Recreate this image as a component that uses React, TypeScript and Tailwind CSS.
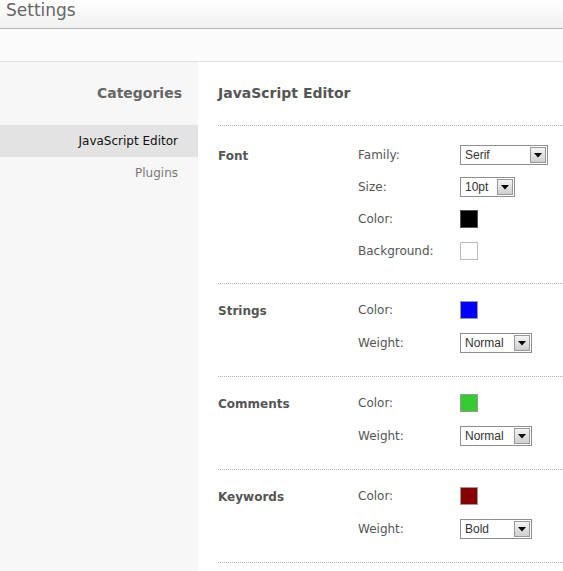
import React from "react";

const font = { fontFamily: '"DejaVu Sans", Verdana, sans-serif' };

function Select({ value, width }: { value: string; width: string }) {
  return (
    <div className={`flex h-[20px] items-stretch border border-[#8e8e8e] bg-white ${width}`}>
      <div className="flex flex-1 items-center pl-[4px] text-[12px] text-[#333]" style={{ fontFamily: '"Liberation Sans", Arial, sans-serif' }}>
        {value}
      </div>
      <div className="m-[1px] flex w-[16px] items-center justify-center border border-[#999] bg-gradient-to-b from-[#f4f4f4] to-[#cfcfcf]">
        <svg width="8" height="5" viewBox="0 0 8 5"><path d="M0 0h8L4 4.5z" fill="#000" /></svg>
      </div>
    </div>
  );
}

function Swatch({ color, border }: { color: string; border: string }) {
  return <div className={`h-[18px] w-[18px] border ${color} ${border}`} />;
}

function Row({ label, h, children }: { label: string; h: string; children: React.ReactNode }) {
  return (
    <div className={`flex items-center ${h}`}>
      <div className="w-[102px] text-[12px] text-[#555]">{label}</div>
      {children}
    </div>
  );
}

function Section({ title, pad, children }: { title: string; pad: string; children: React.ReactNode }) {
  return (
    <div className={`flex border-t border-dotted border-[#b0b0b0] ${pad}`}>
      <div className="w-[140px] pt-[8px] text-[12px] font-bold text-[#555]">{title}</div>
      <div className="flex flex-col">{children}</div>
    </div>
  );
}

export default function App() {
  return (
    <div className="flex h-[571px] w-[563px] flex-col overflow-hidden bg-white" style={font}>
      <div className="flex h-[29px] items-center border-b border-[#b4b4b4] bg-gradient-to-b from-white to-[#f1f1f1] pl-[6px] pb-[6px] text-[17px] text-[#666]">
        Settings
      </div>
      <div className="h-[33px] border-b border-[#e2e2e2] bg-[#fbfbfb]" />
      <div className="flex flex-1">
        <div className="flex w-[198px] flex-col bg-[#f7f7f7]">
          <div className="pr-[16px] pt-[21px] text-right text-[14px] font-bold text-[#666]">Categories</div>
          <div className="mt-[21px] flex h-[32px] items-center justify-end bg-[#e3e3e3] pr-[20px] text-[12px] text-[#111]">
            JavaScript Editor
          </div>
          <div className="flex h-[32px] items-center justify-end pr-[20px] text-[12px] text-[#777]">Plugins</div>
        </div>
        <div className="flex flex-1 flex-col pl-[20px]">
          <div className="h-[63px] pt-[21px] text-[14px] font-bold text-[#555]">JavaScript Editor</div>
          <Section title="Font" pad="pt-[13px] pb-[16px]">
            <Row label="Family:" h="h-[32px]"><Select value="Serif" width="w-[88px]" /></Row>
            <Row label="Size:" h="h-[32px]"><Select value="10pt" width="w-[55px]" /></Row>
            <Row label="Color:" h="h-[32px]"><Swatch color="bg-black" border="border-[#555]" /></Row>
            <Row label="Background:" h="h-[32px]"><Swatch color="bg-white" border="border-[#bbb]" /></Row>
          </Section>
          <Section title="Strings" pad="pt-[10px] pb-[16px]">
            <Row label="Color:" h="h-[32px]"><Swatch color="bg-[#0000ff]" border="border-[#999]" /></Row>
            <Row label="Weight:" h="h-[34px]"><Select value="Normal" width="w-[72px]" /></Row>
          </Section>
          <Section title="Comments" pad="pt-[10px] pb-[16px]">
            <Row label="Color:" h="h-[32px]"><Swatch color="bg-[#33cc33]" border="border-[#999]" /></Row>
            <Row label="Weight:" h="h-[34px]"><Select value="Normal" width="w-[72px]" /></Row>
          </Section>
          <Section title="Keywords" pad="pt-[10px] pb-[16px]">
            <Row label="Color:" h="h-[32px]"><Swatch color="bg-[#880000]" border="border-[#999]" /></Row>
            <Row label="Weight:" h="h-[34px]"><Select value="Bold" width="w-[72px]" /></Row>
          </Section>
          <div className="border-t border-dotted border-[#b0b0b0]" />
        </div>
      </div>
    </div>
  );
}
